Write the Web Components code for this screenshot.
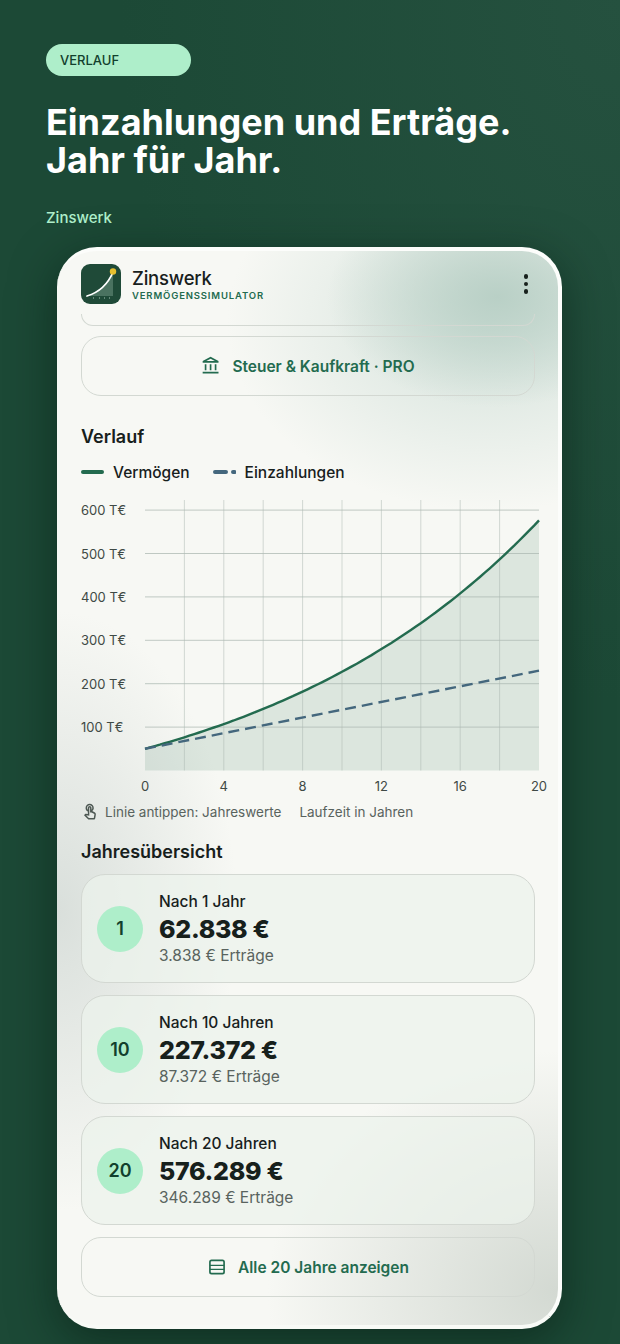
<!DOCTYPE html>
<html lang="de">
<head>
<meta charset="utf-8">
<title>Zinswerk</title>
<style>
    html, body { margin: 0; height: 100%; }
    body { background: #1c4936; font-family: Inter, "Liberation Sans", sans-serif; }
</style>
</head>
<body>
<promo-page>
    <span slot="pill">VERLAUF</span>
    <span slot="title">Einzahlungen und Erträge.<br>Jahr für Jahr.</span>
    <span slot="brand">Zinswerk</span>
    <phone-frame>
        <app-header></app-header>
        <app-content>
            <div class="cut" slot="cut"></div>
            <outline-button icon="bank">Steuer &amp; Kaufkraft · PRO</outline-button>
            <section-title style="margin-top:29px">Verlauf</section-title>
            <growth-chart></growth-chart>
            <section-title style="margin-top:18px">Jahresübersicht</section-title>
            <year-card badge="10" style="display:none"></year-card>
            <year-card badge="1" style="margin-top:10px" title="Nach 1 Jahr" amount="62.838 €" gain="3.838 € Erträge"></year-card>
            <year-card badge="10" title="Nach 10 Jahren" amount="227.372 €" gain="87.372 € Erträge"></year-card>
            <year-card badge="20" title="Nach 20 Jahren" amount="576.289 €" gain="346.289 € Erträge"></year-card>
            <outline-button icon="table" style="margin-top:12px">Alle 20 Jahre anzeigen</outline-button>
        </app-content>
    </phone-frame>
</promo-page>

<script>
    const ICONS = {
        bank: '<path d="M6.5 10h-2v7h2v-7zm6 0h-2v7h2v-7zm8.5 9H2v2h19v-2zm-2.5-9h-2v7h2v-7zm-7-6.74L16.71 6H6.29l5.21-2.74m0-2.26L2 6v2h19V6l-9.5-5z"/>',
        table: '<rect x="3.5" y="4" width="17" height="16" rx="2" fill="none" stroke="currentColor" stroke-width="2"/><path d="M3.5 9.3h17v1.6h-17zM3.5 14h17v1.6h-17z"/>',
        touch: '<path d="M18.19 12.44l-3.24-1.62c1.29-1 2.12-2.56 2.12-4.32 0-3.03-2.47-5.5-5.5-5.5s-5.5 2.47-5.5 5.5c0 2.13 1.22 3.98 3 4.89v3.26c-2.15-.46-2.02-.44-2.26-.44-.53 0-1.03.21-1.41.59L4 16.22l5.09 5.09C9.52 21.75 10.12 22 10.74 22h6.3c.98 0 1.81-.7 1.97-1.67l.8-4.71c.22-1.3-.43-2.58-1.62-3.18zm-.35 2.85l-.8 4.71h-6.3c-.09 0-.17-.04-.24-.1l-3.68-3.68 4.25.89V6.5c0-.28.22-.5.5-.5s.5.22.5.5v6h1.76l3.46 1.73c.4.2.62.63.55 1.06zM8.07 6.5c0-1.93 1.57-3.5 3.5-3.5s3.5 1.57 3.5 3.5c0 .95-.38 1.81-1 2.44V6.5c0-1.38-1.12-2.5-2.5-2.5s-2.5 1.12-2.5 2.5v2.44c-.62-.63-1-1.49-1-2.44z"/>'
    };


    class PromoPage extends HTMLElement {
        constructor() {
            super();
            this.attachShadow({ mode: 'open' }).innerHTML = `
                <style>
                    :host {
                        display: block;
                        box-sizing: border-box;
                        height: 1344px;
                        overflow: hidden;
                        padding: 44px 58px 0 46px;
                        background:
                            radial-gradient(500px 700px at 100% 0%, #25513f 0%, rgba(37, 81, 63, 0) 100%),
                            #1c4936;
                    }
                    .pill {
                        display: block;
                        box-sizing: border-box;
                        width: 145px;
                        height: 32px;
                        padding-left: 14px;
                        border-radius: 16px;
                        background: #aeeeca;
                        color: #12402d;
                        font-size: 13px;
                        font-weight: 500;
                        line-height: 33px;
                    }
                    h1 {
                        margin: 27px 0 0;
                        color: #fff;
                        font-size: 36px;
                        font-weight: 700;
                        line-height: 38px;
                        white-space: nowrap;
                    }
                    .brand {
                        margin-top: 29px;
                        color: #aeeeca;
                        font-size: 15px;
                        font-weight: 500;
                        line-height: 20px;
                    }
                    .phone { margin: 19px 0 0 11px; }
                </style>
                <div class="pill"><slot name="pill"></slot></div>
                <h1><slot name="title"></slot></h1>
                <div class="brand"><slot name="brand"></slot></div>
                <div class="phone"><slot></slot></div>
            `;
        }
    }


    class PhoneFrame extends HTMLElement {
        constructor() {
            super();
            this.attachShadow({ mode: 'open' }).innerHTML = `
                <style>
                    :host {
                        display: flex;
                        flex-direction: column;
                        box-sizing: border-box;
                        width: 505px;
                        height: 1082px;
                        overflow: hidden;
                        border: 4px solid #fcfdfb;
                        border-left-width: 0;
                        border-bottom-color: #f8faf6;
                        border-radius: 40px;
                        background:
                            radial-gradient(170px 110px at 440px 46px, #b9d0c6 0%, rgba(185, 208, 198, 0) 100%),
                            radial-gradient(260px 190px at 430px 70px, rgba(200, 218, 210, .75) 0%, rgba(200, 218, 210, 0) 100%),
                            radial-gradient(290px 240px at 500px 1040px, #d3d9d2 0%, rgba(211, 217, 210, 0) 100%),
                            radial-gradient(180px 300px at 0px 660px, #d9dfdb 0%, rgba(217, 223, 219, 0) 100%),
                            #f7f8f4;
                        box-shadow: 0 12px 46px rgba(5, 25, 17, .55);
                    }
                </style>
                <slot></slot>
            `;
        }
    }


    class AppHeader extends HTMLElement {
        constructor() {
            super();
            this.attachShadow({ mode: 'open' }).innerHTML = `
                <style>
                    :host {
                        display: flex;
                        align-items: center;
                        flex: none;
                        height: 63px;
                        padding: 0 24px;
                    }
                    .logo { width: 40px; height: 40px; flex: none; margin-top: 3px; }
                    .names { margin-left: 11px; margin-top: 3px; }
                    .name {
                        color: #17201c;
                        font-size: 18.5px;
                        font-weight: 500;
                        line-height: 22px;
                        letter-spacing: -.2px;
                    }
                    .sub {
                        color: #236b4f;
                        font-size: 9.5px;
                        font-weight: 600;
                        line-height: 13px;
                        letter-spacing: .85px;
                    }
                    .dots {
                        display: flex;
                        flex-direction: column;
                        gap: 3px;
                        margin: 3px 6px 0 auto;
                    }
                    .dots i { width: 4.4px; height: 4.4px; border-radius: 50%; background: #17201c; }
                </style>
                <svg class="logo" viewBox="0 0 40 40">
                    <rect width="40" height="40" rx="9" fill="#1f4a38"/>
                    <path d="M7 32C20 27 27 20 32 8V32Z" fill="#4a7260"/>
                    <path d="M6 32C19 28 27 20 32 8" fill="none" stroke="#fff" stroke-width="1.8" stroke-linecap="round"/>
                    <path d="M12 34h1M18 34h1M23 34h1M28 34h1" stroke="#a5c4b5" stroke-width="1"/>
                    <circle cx="32" cy="7.500" r="3.200" fill="#e6c02f"/>
                </svg>
                <div class="names">
                    <div class="name">Zinswerk</div>
                    <div class="sub">VERMÖGENSSIMULATOR</div>
                </div>
                <div class="dots"><i></i><i></i><i></i></div>
            `;
        }
    }


    class AppContent extends HTMLElement {
        constructor() {
            super();
            this.attachShadow({ mode: 'open' }).innerHTML = `
                <style>
                    :host {
                        display: flex;
                        flex-direction: column;
                        padding: 0 23px 0 24px;
                    }
                    .stub {
                        height: 11px;
                        margin-bottom: 10px;
                        border: 1px solid #d3d8d2;
                        border-top: 0;
                        border-radius: 0 0 20px 20px;
                    }
                </style>
                <div class="stub"></div>
                <slot></slot>
            `;
        }
    }


    class OutlineButton extends HTMLElement {
        constructor() {
            super();
            const icon = ICONS[this.getAttribute('icon')];
            this.attachShadow({ mode: 'open' }).innerHTML = `
                <style>
                    :host {
                        display: flex;
                        align-items: center;
                        justify-content: center;
                        gap: 11px;
                        box-sizing: border-box;
                        height: 60px;
                        border: 1px solid #d3d8d2;
                        border-radius: 20px;
                        color: #236b4f;
                        font-size: 15.500px;
                        font-weight: 600;
                    }
                    svg { width: 20px; height: 20px; fill: currentColor; flex: none; }
                </style>
                <svg viewBox="0 0 24 24">${icon}</svg>
                <span><slot></slot></span>
            `;
        }
    }


    class SectionTitle extends HTMLElement {
        constructor() {
            super();
            this.attachShadow({ mode: 'open' }).innerHTML = `
                <style>
                    :host {
                        display: block;
                        color: #17201c;
                        font-size: 18px;
                        font-weight: 600;
                        line-height: 24px;
                    }
                </style>
                <slot></slot>
            `;
        }
    }


    class GrowthChart extends HTMLElement {
        constructor() {
            super();
            this.attachShadow({ mode: 'open' }).innerHTML = `
                <style>
                    :host { display: block; }
                    .legend {
                        display: flex;
                        align-items: center;
                        height: 22px;
                        margin-top: 12px;
                        color: #17201c;
                        font-size: 15.500px;
                        font-weight: 500;
                    }
                    .legend svg { width: 23px; height: 4px; margin-right: 9px; flex: none; }
                    .legend span { margin-right: 23px; }
                    .plot { display: block; width: 470px; height: 310px; margin-top: 9px; }
                    .plot text {
                        fill: #3f4a45;
                        font-size: 13px;
                        font-family: Inter, "Liberation Sans", sans-serif;
                    }
                    .hint {
                        display: flex;
                        align-items: center;
                        height: 20px;
                        margin-top: 0;
                        color: #59635e;
                        font-size: 13.500px;
                    }
                    .hint svg { width: 18px; height: 18px; margin-right: 6px; fill: #4d5853; flex: none; }
                    .hint span + span { margin-left: 18px; }
                </style>
                <div class="legend">
                    <svg viewBox="0 0 23 4"><path d="M2 2H21" stroke="#236b4f" stroke-width="4" stroke-linecap="round"/></svg>
                    <span>Vermögen</span>
                    <svg viewBox="0 0 23 4"><path d="M2 2H13M20 2H21.500" stroke="#44677d" stroke-width="4" stroke-linecap="round"/></svg>
                    <span>Einzahlungen</span>
                </div>
                <svg class="plot" viewBox="0 0 470 310"></svg>
                <div class="hint">
                    <svg viewBox="0 0 24 24">${ICONS.touch}</svg>
                    <span>Linie antippen: Jahreswerte</span>
                    <span>Laufzeit in Jahren</span>
                </div>
            `;
        }

        connectedCallback() {
            this.#drawPlot();
        }

        #drawPlot() {
            const left = 64, right = 458, base = 278.5, rowHeight = 43.4;
            const xOf = year => left + (right - left) * year / 20;
            const yOf = euro => base - euro / 100000 * rowHeight;
            const monthly = Math.pow(1.07, 1 / 12) - 1;
            const wealth = year => {
                const grow = Math.pow(1.07, year);
                return 50000 * grow + 750 * (grow - 1) / monthly * (1 + monthly);
            };

            let line = '', dashed = '';
            for (let year = 0; year <= 20; year += 0.25) {
                line += `${year ? 'L' : 'M'}${xOf(year).toFixed(1)} ${yOf(wealth(year)).toFixed(1)}`;
            }
            dashed = `M${xOf(0)} ${yOf(50000)}L${xOf(20)} ${yOf(230000)}`;

            let grid = '';
            for (let year = 2; year <= 18; year += 2) {
                grid += `<path d="M${xOf(year)} 8V${base}" stroke="#acb8b1" stroke-opacity=".5"/>`;
            }
            for (let row = 1; row <= 6; row++) {
                const y = yOf(row * 100000);
                grid += `<path d="M${left} ${y}H${right}" stroke="#acb8b1" stroke-opacity=".75"/>`;
                grid += `<text x="0" y="${y + 5}">${row}00 T€</text>`;
            }
            for (let year = 0; year <= 20; year += 4) {
                grid += `<text x="${xOf(year)}" y="${base + 20}" text-anchor="middle">${year}</text>`;
            }

            this.shadowRoot.querySelector('.plot').innerHTML = `
                <path d="${line}L${right} ${base}L${left} ${base}Z" fill="#236b4f" fill-opacity=".13"/>
                ${grid}
                <path d="${line}" fill="none" stroke="#236b4f" stroke-width="2.4"/>
                <path d="${dashed}" fill="none" stroke="#44677d" stroke-width="2.4" stroke-dasharray="11 6"/>
            `;
        }
    }


    class YearCard extends HTMLElement {
        constructor() {
            super();
            this.attachShadow({ mode: 'open' }).innerHTML = `
                <style>
                    :host {
                        display: flex;
                        align-items: center;
                        box-sizing: border-box;
                        height: 109px;
                        margin-top: 12px;
                        padding-left: 15px;
                        border: 1px solid #d3d8d2;
                        border-radius: 24px;
                        background: rgba(236, 243, 236, .72);
                    }
                    .badge {
                        display: flex;
                        align-items: center;
                        justify-content: center;
                        width: 46px;
                        height: 46px;
                        flex: none;
                        border-radius: 50%;
                        background: #aeeeca;
                        color: #12402d;
                        font-size: 18px;
                        font-weight: 600;
                    }
                    .text { margin-left: 16px; }
                    .title { color: #17201c; font-size: 15.500px; font-weight: 500; line-height: 20px; }
                    .amount { color: #17201c; font-size: 25px; font-weight: 800; line-height: 34px; letter-spacing: -.3px; }
                    .gain { color: #59635e; font-size: 15.500px; line-height: 20px; }
                </style>
                <div class="badge">${this.getAttribute('badge')}</div>
                <div class="text">
                    <div class="title">${this.getAttribute('title') || ''}</div>
                    <div class="amount">${this.getAttribute('amount') || ''}</div>
                    <div class="gain">${this.getAttribute('gain') || ''}</div>
                </div>
            `;
        }
    }


    window.customElements.define('promo-page', PromoPage);
    window.customElements.define('phone-frame', PhoneFrame);
    window.customElements.define('app-header', AppHeader);
    window.customElements.define('app-content', AppContent);
    window.customElements.define('outline-button', OutlineButton);
    window.customElements.define('section-title', SectionTitle);
    window.customElements.define('growth-chart', GrowthChart);
    window.customElements.define('year-card', YearCard);
</script>
</body>
</html>
